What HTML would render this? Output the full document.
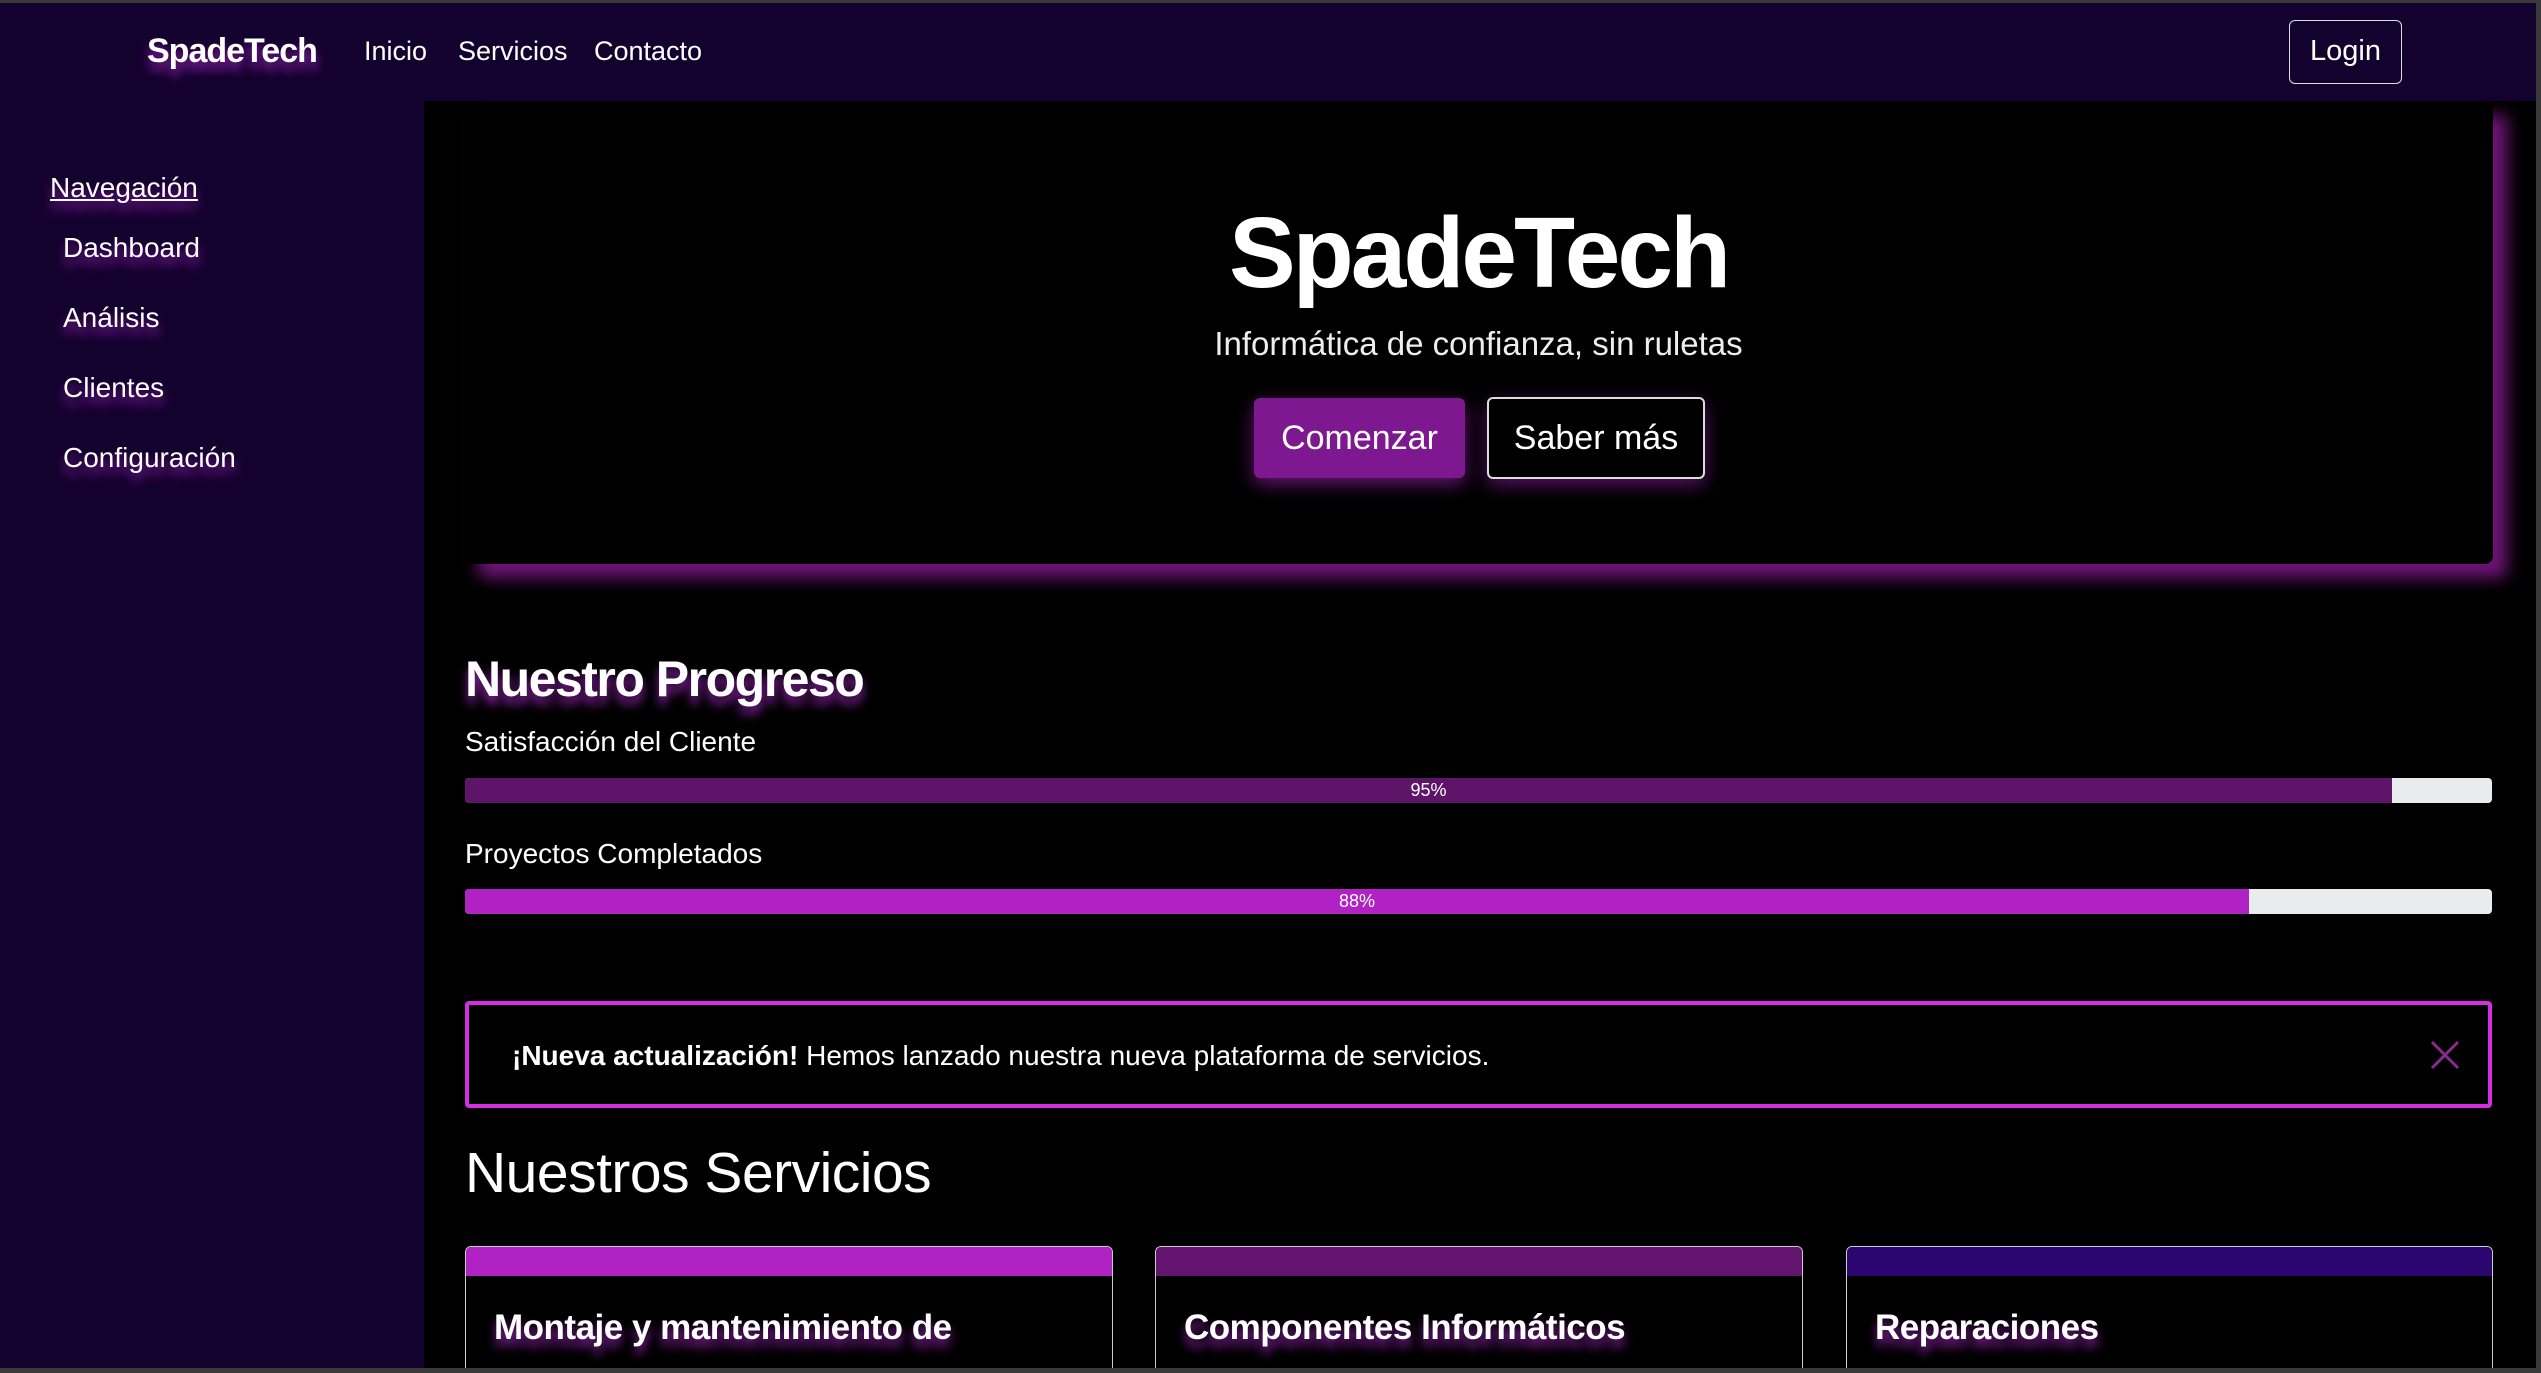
<!DOCTYPE html>
<html><head><meta charset="utf-8"><style>
*{margin:0;padding:0;box-sizing:border-box}
body{width:2541px;height:1373px;background:#000;font-family:"Liberation Sans",sans-serif;color:#fff;position:relative;overflow:hidden}
.a{position:absolute;white-space:nowrap}
.glow{text-shadow:0 8px 10px rgba(160,40,190,.85)}
</style></head><body>
<div class="a" style="left:0;top:0;width:2541px;height:3px;background:#3a3a3a"></div>
<div class="a" style="left:0;top:3px;width:2536px;height:98px;background:#14022e"></div>
<div class="a glow" style="left:147px;top:32px;font-size:34px;font-weight:bold;letter-spacing:-1px">SpadeTech</div>
<div class="a" style="left:364px;top:36px;font-size:27px">Inicio</div>
<div class="a" style="left:458px;top:36px;font-size:27px">Servicios</div>
<div class="a" style="left:594px;top:36px;font-size:27px">Contacto</div>
<div class="a" style="left:2289px;top:20px;width:113px;height:64px;border:1.5px solid #ddd;border-radius:6px;font-size:29px;text-align:center;line-height:60px">Login</div>

<div class="a" style="left:0;top:101px;width:424px;height:1272px;background:#14022e"></div>
<div class="a glow" style="left:50px;top:172px;font-size:28px;text-decoration:underline">Navegación</div>
<div class="a glow" style="left:63px;top:232px;font-size:28px">Dashboard</div>
<div class="a glow" style="left:63px;top:302px;font-size:28px">Análisis</div>
<div class="a glow" style="left:63px;top:372px;font-size:28px">Clientes</div>
<div class="a glow" style="left:63px;top:442px;font-size:28px">Configuración</div>

<div class="a" style="left:464px;top:101px;width:2029px;height:463px;background:#000;border-radius:0 0 8px 8px;box-shadow:14px 14px 16px #6e1476"></div>
<div class="a" style="left:464px;top:196px;width:2029px;text-align:center;font-size:100px;font-weight:bold;letter-spacing:-3px">SpadeTech</div>
<div class="a" style="left:464px;top:325px;width:2029px;text-align:center;font-size:33px;color:#eee">Informática de confianza, sin ruletas</div>
<div class="a" style="left:1254px;top:398px;width:211px;height:80px;background:#7e1890;border-radius:6px;box-shadow:0 6px 18px rgba(140,30,160,.7);font-size:34px;text-align:center;line-height:80px">Comenzar</div>
<div class="a" style="left:1487px;top:397px;width:218px;height:82px;border:2px solid #ddd;border-radius:6px;box-shadow:0 6px 18px rgba(140,30,160,.6);font-size:34px;text-align:center;line-height:78px">Saber más</div>

<div class="a glow" style="left:465px;top:650px;font-size:50px;font-weight:bold;letter-spacing:-1.5px">Nuestro Progreso</div>
<div class="a" style="left:465px;top:726px;font-size:28px">Satisfacción del Cliente</div>
<div class="a" style="left:465px;top:778px;width:2027px;height:25px;background:#e9ecef;border-radius:4px;overflow:hidden"><div style="width:1927px;height:25px;background:#5e1569;color:#fff;font-size:18px;text-align:center;line-height:25px">95%</div></div>
<div class="a" style="left:465px;top:838px;font-size:28px">Proyectos Completados</div>
<div class="a" style="left:465px;top:889px;width:2027px;height:25px;background:#e9ecef;border-radius:4px;overflow:hidden"><div style="width:1784px;height:25px;background:#b022c4;color:#fff;font-size:18px;text-align:center;line-height:25px">88%</div></div>

<div class="a" style="left:465px;top:1001px;width:2027px;height:107px;border:4px solid #d42de2;border-radius:4px"></div>
<div class="a" style="left:512px;top:1040px;font-size:28px"><b>¡Nueva actualización!</b> Hemos lanzado nuestra nueva plataforma de servicios.</div>
<svg class="a" style="left:2430px;top:1040px" width="30" height="30" viewBox="0 0 30 30"><path d="M2 2L28 28M28 2L2 28" stroke="#8a2a90" stroke-width="3"/></svg>

<div class="a" style="left:465px;top:1140px;font-size:57px;letter-spacing:-.5px;font-weight:500">Nuestros Servicios</div>

<div class="a" style="left:465px;top:1246px;width:648px;height:124px;border:1.5px solid #ccc;border-radius:6px 6px 0 0;overflow:hidden"><div style="height:29px;background:#b022c4"></div></div>
<div class="a" style="left:1155px;top:1246px;width:648px;height:124px;border:1.5px solid #ccc;border-radius:6px 6px 0 0;overflow:hidden"><div style="height:29px;background:#62146e"></div></div>
<div class="a" style="left:1846px;top:1246px;width:647px;height:124px;border:1.5px solid #ccc;border-radius:6px 6px 0 0;overflow:hidden"><div style="height:29px;background:#2c0670"></div></div>
<div class="a glow" style="left:494px;top:1308px;font-size:35px;font-weight:bold;letter-spacing:-.5px">Montaje y mantenimiento de</div>
<div class="a glow" style="left:1184px;top:1308px;font-size:35px;font-weight:bold;letter-spacing:-.5px">Componentes Informáticos</div>
<div class="a glow" style="left:1875px;top:1308px;font-size:35px;font-weight:bold;letter-spacing:-.5px">Reparaciones</div>

<div class="a" style="left:2536px;top:0;width:5px;height:1373px;background:#3a3a3a"></div>
<div class="a" style="left:0;top:1368px;width:2541px;height:5px;background:#3a3a3a"></div>
</body></html>
